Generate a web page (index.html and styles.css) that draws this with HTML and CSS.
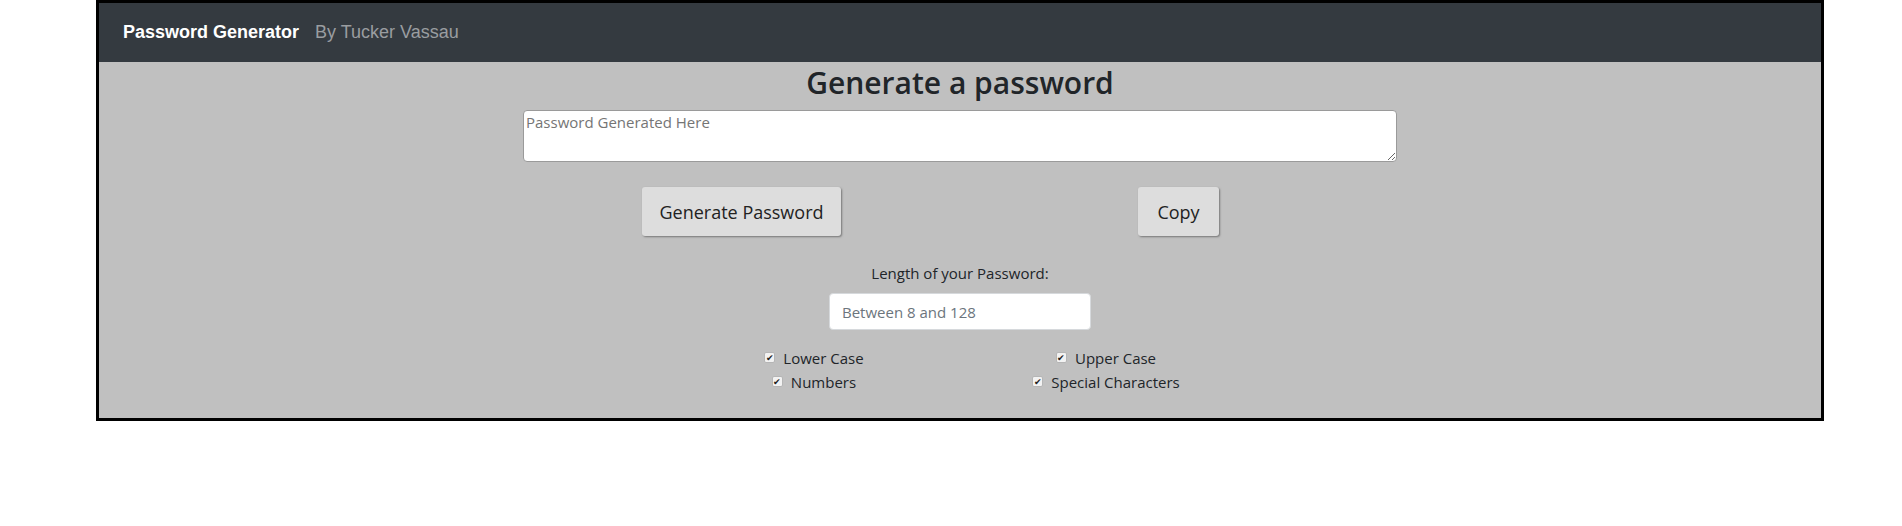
FILE: index.html
```html
<!DOCTYPE html>
<html lang="en">
<head>
<meta charset="utf-8">
<title>Password Generator</title>
<link rel="stylesheet" href="styles.css">
</head>
<body>
<div class="frame">
  <nav class="navbar">
    <span class="brand">Password Generator</span>
    <span class="by">By Tucker Vassau</span>
  </nav>
  <main class="main">
    <h2 class="title">Generate a password</h2>
    <textarea class="output" placeholder="Password Generated Here"></textarea>
    <div class="actions">
      <div class="cell"><button class="btn">Generate Password</button></div>
      <div class="cell"><button class="btn btn-copy">Copy</button></div>
    </div>
    <label class="len-label">Length of your Password:</label>
    <input class="len-input" type="text" placeholder="Between 8 and 128">
    <div class="options">
      <div class="col">
        <label class="opt"><span class="box">&#10004;</span>Lower Case</label>
        <label class="opt"><span class="box">&#10004;</span>Numbers</label>
      </div>
      <div class="col">
        <label class="opt"><span class="box">&#10004;</span>Upper Case</label>
        <label class="opt"><span class="box">&#10004;</span>Special Characters</label>
      </div>
    </div>
  </main>
</div>
</body>
</html>
```
FILE: styles.css
```css
* { box-sizing: border-box; }
html, body { margin: 0; padding: 0; background: #fff; }
body { font-family: "Open Sans", "Noto Sans", sans-serif; color: #212529; }

.frame {
  margin-left: 96px;
  width: 1728px;
  border: 3px solid #000;
  background: #c0c0c0;
}

.navbar {
  height: 59px;
  background: #343a40;
  display: flex;
  align-items: center;
  padding-left: 24px;
  font-family: "Liberation Sans", Arial, sans-serif;
}
.brand { color: #fff; font-weight: bold; font-size: 18px; margin-right: 16px; }
.by { color: #9a9da0; font-size: 18px; }

.main {
  display: flex;
  flex-direction: column;
  align-items: center;
  padding-bottom: 24px;
}
.title {
  margin: 1px 0 7px;
  font-size: 30px;
  font-weight: 600;
  line-height: 40px;
  color: #212529;
}
.output {
  display: block;
  width: 874px;
  height: 52px;
  border: 1px solid #9a9a9a;
  border-radius: 4px;
  padding: 1px 2px;
  font-family: "Open Sans", sans-serif;
  font-size: 15px;
  background: #fff;
  resize: vertical;
}
.output::placeholder { color: #757575; }

.actions {
  width: 874px;
  display: grid;
  grid-template-columns: 1fr 1fr;
  margin-top: 25px;
}
.cell { display: flex; justify-content: center; }
.btn {
  height: 49px;
  padding: 0 17px;
  background: #dddddd;
  border: none;
  border-radius: 3px;
  box-shadow: 1px 1px 2px #777;
  font-family: "Open Sans", sans-serif;
  font-size: 18px;
  color: #222;
}
.btn-copy { padding: 0 19px; }

.len-label {
  margin-top: 26px;
  font-size: 15px;
  line-height: 22px;
}
.len-input {
  margin-top: 9px;
  width: 262px;
  height: 37px;
  border: 1px solid #d6d9dc;
  border-radius: 4px;
  padding: 0 12px;
  font-family: "Open Sans", sans-serif;
  font-size: 15px;
  background: #fff;
}
.len-input::placeholder { color: #6c757d; }

.options {
  margin-top: 16px;
  display: grid;
  grid-template-columns: 292px 292px;
}
.col { display: flex; flex-direction: column; align-items: center; }
.opt {
  display: flex;
  align-items: center;
  height: 24px;
  font-size: 15px;
}
.box {
  width: 11px;
  height: 11px;
  margin-right: 8px;
  background: #f2f2f2;
  border: 1px solid #b5b5b5;
  border-radius: 2px;
  font-size: 9px;
  line-height: 9px;
  text-align: center;
  color: #222;
  margin-top: -2px;
}
```
